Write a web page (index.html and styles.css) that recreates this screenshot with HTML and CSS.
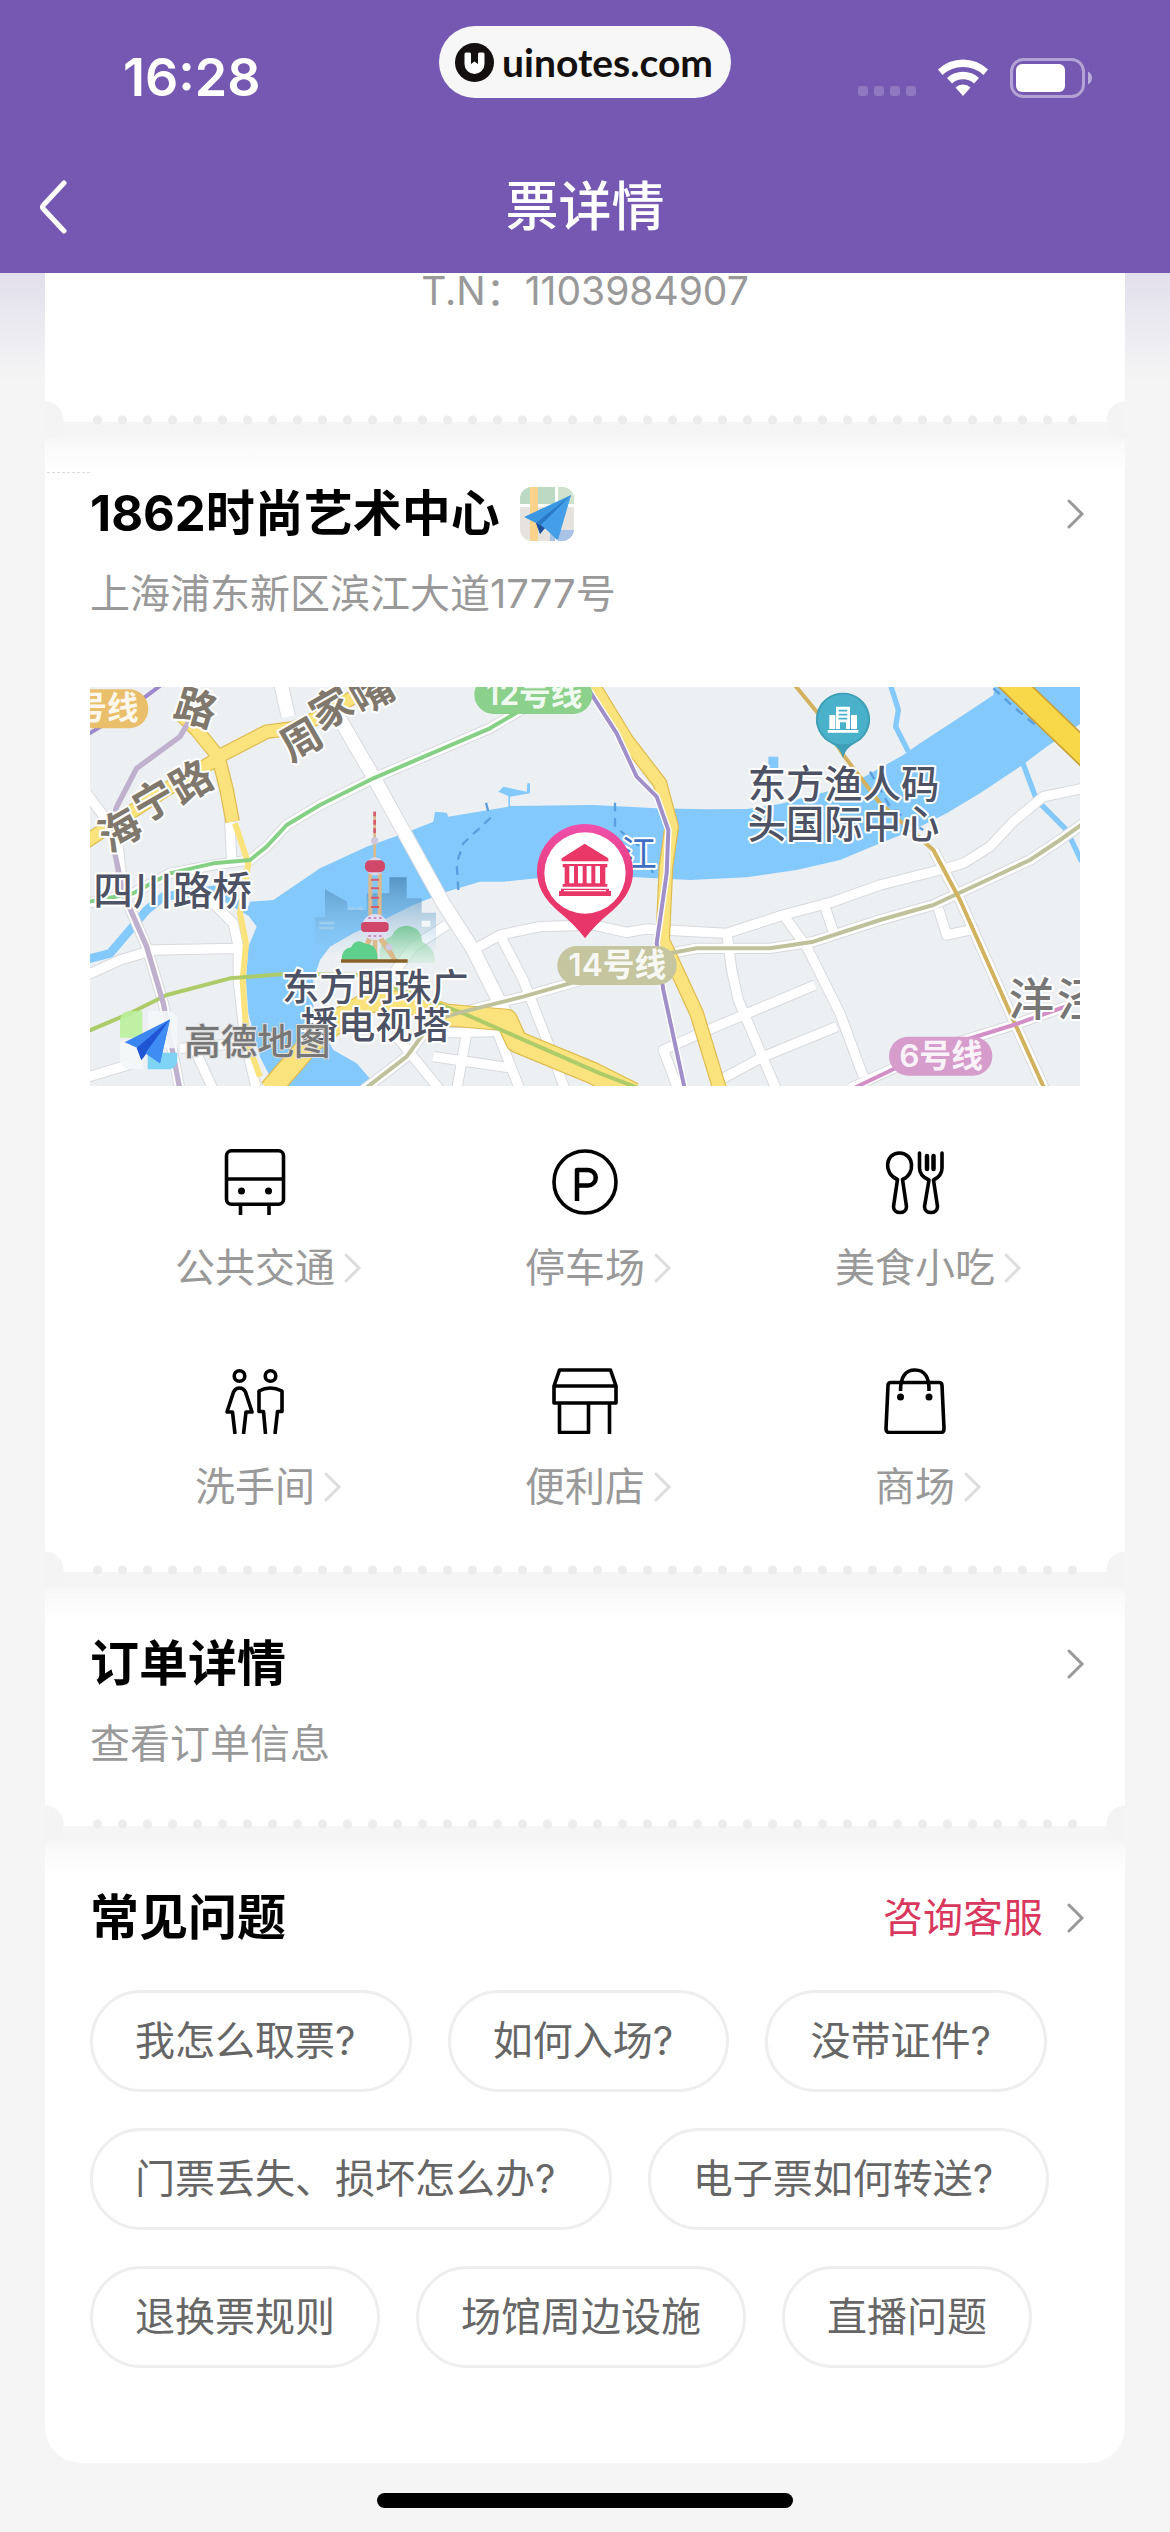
FILE: index.html
```html
<!DOCTYPE html>
<html lang="zh-CN">
<head>
    <meta charset="UTF-8">
    <meta name="viewport" content="width=device-width, initial-scale=1.0">
    <title>票详情</title>
    <link rel="stylesheet" href="styles.css">
</head>
<body>
    <header class="header">
        <div class="status">
            <span class="time">16:28</span>
            <div class="pill">
                <svg width="39" height="39" viewBox="0 0 39 39">
                    <circle cx="19.500" cy="19.500" r="19.500" fill="#14100f"/>
                    <path d="M9.500 11q0-1.500 1.500-1.500h3.500q1.500 0 1.500 1.500v10l3.500-2.500L23 21V11q0-1.500 1.500-1.500H28q1.500 0 1.500 1.500v10a10 10 0 0 1-20 0z" fill="#fff"/>
                </svg>
                <span>uinotes.com</span>
            </div>
            <div class="signals">
                <span class="cell"><i></i><i></i><i></i><i></i></span>
                <svg width="50" height="38" viewBox="0 0 50 38" fill="#fff">
                    <path d="M0 10.500a36 36 0 0 1 50 0l-4.500 5.500a30 30 0 0 0-41 0z"/>
                    <path d="M9 19a23.500 23.500 0 0 1 32 0l-5 5.500a16.500 16.500 0 0 0-22 0z"/>
                    <path d="M17.500 28.500a11 11 0 0 1 15 0L25 37z"/>
                </svg>
                <svg width="83" height="40" viewBox="0 0 83 40">
                    <rect x="1.500" y="1.500" width="72" height="37" rx="12" fill="none" stroke="#fff" stroke-opacity=".45" stroke-width="3"/>
                    <rect x="6" y="6" width="49" height="28" rx="6" fill="#fff"/>
                    <path d="M78 13.500q4 2 4 6.500t-4 6.500z" fill="#fff" fill-opacity=".5"/>
                </svg>
            </div>
        </div>
        <div class="nav">
            <button class="back" aria-label="返回">
                <svg width="28" height="54" viewBox="0 0 28 54"><path d="M25 3 4.500 25q-2 2 0 4L25 51" fill="none" stroke="#fff" stroke-width="5" stroke-linecap="round" stroke-linejoin="round"/></svg>
            </button>
            <h1>票详情</h1>
        </div>
    </header>

    <main class="ticket">
        <section class="part number">
            <p>T.N：1103984907</p>
        </section>

        <section class="part venue">
            <a class="row" href="#">
                <h2>1862时尚艺术中心</h2>
                <svg class="map-icon" width="54" height="54" viewBox="0 0 54 54">
                    <clipPath id="tile"><rect width="54" height="54" rx="12"/></clipPath>
                    <g clip-path="url(#tile)">
                        <path fill="#e6e3df" d="M0 0h54v54H0z"/>
                        <path fill="#bcd9c4" d="M0 0h36v17H0z"/>
                        <path fill="#cfe3cc" d="M38 0h16v20H38z"/>
                        <path fill="#a9c3e6" d="M30 43h24v11H30z"/>
                        <path fill="#fff" d="M0 17h54v3H0zM35 0h3v54h-3z"/>
                        <path fill="#f9d38c" d="M10 0h8v54h-8z"/>
                    </g>
                    <path fill="#3b98e0" d="M51 8 4 30l12 6 4-1 17 18z"/>
                    <path fill="#2a78c4" d="M51 8 16 36l4 11z"/>
                    <path fill="#1f4f9c" d="M16 36l4 11 5-6z"/>
                    <path fill="#459fe8" d="M51 8 21 38l17 15z"/>
                </svg>
                <svg class="arrow" width="18" height="30" viewBox="0 0 18 30"><path d="M2 2 15 15 2 28"/></svg>
            </a>
            <p class="sub">上海浦东新区滨江大道1777号</p>

            <!-- street map around the venue -->
            <svg class="map" viewBox="30 21 2970 1197" preserveAspectRatio="xMidYMid slice" role="img">
                <defs>
                    <g id="streets">
                        <path d="M1260 765 1330 900 1420 1130 1455 1230M1100 735 1000 800 940 880M950 1070 1080 1230M1020 1060 1240 1055M1060 1130 1300 1165M1160 1060 1130 1230M1250 1050 1320 1230"/>
                        <path d="M1180 810 1260 765 1380 740 1540 735 1640 757 1700 747 1940 760 2110 705 2260 665 2400 615 2600 565 2650 550 2730 500 2800 425 2890 350 3010 325"/>
                        <path d="M0 675 160 640 270 580 400 555 510 540 560 500 620 435 720 375 880 295 1230 145 1340 80"/>
                        <path d="M850 1230 980 1130 1060 1020 1150 995 1330 950 1540 890 1770 820 1850 805 2070 805 2200 785 2400 720 2560 675 2850 540 2940 480 3010 430"/>
                        <path d="M2560 510 2640 660 2800 1020 2895 1230M2110 705 2180 800 2280 1000 2350 1190M2235 680 2260 755M1942 770 1955 870 1975 960 2060 1160 2090 1230M1795 1230 1750 1110 1860 1060 2205 915M1920 1200 2050 1130 2270 1040M2575 685 2600 765 2670 750M2310 1225 2560 1110 2800 1035 2970 975"/>
                        <path d="M10 890 120 840 220 810 470 805M20 340 110 460 130 640 200 800 250 970 300 1230M10 1195 160 1150M300 1105 480 1090M340 1100 400 1230M448 390 455 540M390 660 460 730 475 800 475 900 495 1080 530 1230"/>
                    </g>
                    <g id="main-streets">
                        <path d="M600 0 625 110M740 50 880 290 1090 670 1180 810 1280 1010"/>
                    </g>
                    <g id="avenues">
                        <path d="M300 100 350 150 415 230 440 330 458 425M415 230 560 155 640 145 720 110 840 40M415 235 240 340 10 490"/>
                        <path d="M1530 0 1640 180 1740 310 1775 440 1758 560 1748 780 1850 1000 1920 1230"/>
                    </g>
                    <g id="tunnel">
                        <path d="M570 1230 690 1090 790 1010 870 965 980 965 1100 1005 1280 1020 1310 1085 1540 1180 1660 1240"/>
                    </g>
                    <linearGradient id="pink" x1="0" y1="0" x2="0" y2="1"><stop offset="0" stop-color="#ee50ac"/><stop offset=".6" stop-color="#e9366a"/></linearGradient>
                    <linearGradient id="city" x1="0" y1="0" x2="0" y2="1"><stop offset="0" stop-color="#4a88b8"/><stop offset="1" stop-color="#8fc4e6" stop-opacity="0"/></linearGradient>
                    <linearGradient id="tree" x1="0" y1="0" x2="0" y2="1"><stop offset="0" stop-color="#7bc79a"/><stop offset="1" stop-color="#c4ead2" stop-opacity=".5"/></linearGradient>
                </defs>
                <path class="land" d="M0 0h3030v1240H0z"/>
                <path class="water" d="M510 665 580 660 720 565 860 500 985 455 1060 425 1065 395 1100 398 1105 410 1285 380V348L1255 335 1270 320 1340 335 1342 310H1350V340L1290 350V378L1540 375 1730 385 1880 388 2000 387 2100 372 2200 345 2300 320 2380 275 2470 225 2520 190 2650 105 2740 45 2745 10H3010V125L2900 200 2820 260 2700 340 2600 400 2500 450 2400 490 2280 540 2150 570 2000 592 1830 600 1540 585 1400 592 1270 605 1200 605 1100 635 1000 675 920 715 820 760 750 800 720 840 700 900 695 960 720 1040 760 1110 830 1150 900 1230H590L540 1130 505 1000 498 900 505 800 530 740 500 700z"/>
                <path class="water" d="M2065 230h30v35h-30z"/>
                <path class="creek" d="M20 838 90 820 150 750 200 690 250 650 400 630 510 695"/>
                <path class="creek thin" d="M2430 10 2455 90 2447 140 2485 215M2825 240 2870 360 2960 450 3005 545"/>
                <path class="ferry" d="M1218 368 1230 415 1150 490 1130 550 1135 630M1605 368 1605 440 1680 500 1720 580M2740 25 2800 80 2860 130 2925 160M2370 275 2430 380 2480 420 2530 450"/>
                <use href="#streets" class="street-edge"/>
                <use href="#main-streets" class="street-edge wide"/>
                <use href="#streets" class="street"/>
                <use href="#main-streets" class="street wide"/>
                <use href="#avenues" class="avenue-edge"/>
                <use href="#tunnel" class="avenue-edge wide"/>
                <use href="#avenues" class="avenue"/>
                <use href="#tunnel" class="avenue wide"/>
                <path class="avenue side" d="M465 430 505 550 480 700 498 790 488 900 500 1080 540 1190"/>
                <path class="bridge-edge" d="M2760-25 3040 245"/>
                <path class="bridge" d="M2760-25 3040 245"/>

                <path class="line" stroke="#86d086" d="M0 670 160 640 270 580 400 550 510 540 560 500 620 435 720 375 880 295 1230 145 1340 80"/>
                <path class="line" stroke="#aecb69" d="M20 1055 150 1000 260 945 450 895 610 882 860 885 960 930 1150 1000 1560 1180 1690 1230"/>
                <path class="line" stroke="#bfc19b" d="M850 1230 980 1130 1060 1020 1150 995 1330 950 1540 890 1770 820 1850 805 2070 805 2200 785 2400 720 2560 675 2850 540 2940 480 3010 430"/>
                <path class="line" stroke="#d2b25f" d="M2140 10 2210 95 2290 225 2400 370 2560 510 2640 660 2800 1020 2895 1230"/>
                <path class="line" stroke="#d28fc6" d="M2310 1230 2560 1110 2800 1035 2970 975"/>
                <path class="line" stroke="#9c88cc" d="M20 165 130 100 250 10"/>
                <path class="line mauve" stroke="#bfb0ce" d="M335 110 300 170 170 265 110 380 90 450 130 640 200 800 250 970 300 1230"/>
                <path class="line casing" stroke="#fff" d="M1520 20 1610 160 1670 290 1730 350 1765 450 1760 580 1730 790 1750 930 1815 1230"/>
                <path class="line" stroke="#a18fc9" d="M1520 20 1610 160 1670 290 1730 350 1765 450 1760 580 1730 790 1750 930 1815 1230"/>

                <g class="tags">
                    <rect x="-100" y="28" width="305" height="117" rx="58" fill="#e9bf6b"/><text x="-14" y="118">号线</text>
                    <rect x="1183" y="-15" width="354" height="117" rx="58" fill="#8bd08b"/><text x="1218" y="76">12号线</text>
                    <rect x="1432" y="798" width="358" height="117" rx="58" fill="#c5c69f"/><text x="1465" y="889">14号线</text>
                    <rect x="2427" y="1070" width="310" height="117" rx="58" fill="#d69dcc"/><text x="2458" y="1160">6号线</text>
                </g>

                <g class="road-names">
                    <text transform="translate(275 108) rotate(17)">路</text>
                    <text transform="translate(88 520) rotate(-30)">海</text>
                    <text transform="translate(190 432) rotate(-30)">宁</text>
                    <text transform="translate(302 375) rotate(-30)">路</text>
                    <text transform="translate(632 248) rotate(-30)">周</text>
                    <text transform="translate(722 155) rotate(-30)">家</text>
                    <text transform="translate(845 108) rotate(-30)">嘴</text>
                </g>

                <!-- Oriental Pearl tower -->
                <g>
                    <path fill="url(#city)" d="M735 628 802 665V690H860V640H928V592H980V655H1025V698H1068V830H705V712H735z" opacity=".8"/>
                    <path fill="#9fcdf0" d="M718 725h45v8h-45zM718 740h45v8h-45zM805 682h20v8h-20zM830 682h20v8h-20z"/>
                    <path fill="#f4f8fb" d="M1025 722h26v18h-26z"/>
                    <path fill="url(#tree)" d="M900 848q-10-60 35-80 20-40 60-28 30 8 32 46 40 20 38 62z"/>
                    <path fill="#dcb98a" d="M880 395h8v140h-8zM865 580h12v130h-12zM893 580h12v130h-12zM878 775h14v70h-14zM862 770 840 830 852 834 876 780zM908 770 930 800 955 845 940 845 895 780z"/>
                    <path fill="#d65a70" d="M880 395h8v14h-8zM880 420h8v14h-8zM880 445h8v14h-8zM873 596h24v6h-24zM873 622h24v6h-24zM873 650h24v6h-24zM873 678h24v6h-24z"/>
                    <circle cx="884" cy="482" r="11" fill="#cfc9de"/>
                    <circle cx="885" cy="559" r="27" fill="#d9d5ea"/>
                    <rect x="855" y="541" width="60" height="36" rx="15" fill="#d0476a"/>
                    <circle cx="885" cy="741" r="39" fill="#e2def2"/>
                    <rect x="843" y="726" width="83" height="30" rx="11" fill="#d0476a"/>
                    <path stroke="#c98fc0" stroke-width="6" stroke-dasharray="8 8" d="M865 714h42M865 768h42"/>
                    <circle cx="927" cy="802" r="10" fill="#cfc9de"/>
                    <path fill="#5ed08c" d="M785 840q0-35 28-38 15-30 45-10 35 0 35 48z"/>
                    <path fill="#8a6128" d="M783 838h200v10H783z"/>
                </g>

                <g class="poi">
                    <text x="40" y="675" font-size="119">四川路桥</text>
                    <text x="606" y="962" font-size="112">东方明珠广</text>
                    <text x="662" y="1076" font-size="112">播电视塔</text>
                    <text x="2003" y="354" font-size="115">东方渔人码</text>
                    <text x="2003" y="475" font-size="115">头国际中心</text>
                </g>
                <text class="town" x="2786" y="1008">洋</text>
                <text class="town" x="2930" y="1008">泾</text>
                <text class="river-name" x="1622" y="560">江</text>

                <g>
                    <path fill="#3f9fb6" d="M2289 38a80 80 0 0 1 34 153q-27 13-34 44-7-31-34-44a80 80 0 0 1 34-153z"/>
                    <circle cx="2289" cy="118" r="75" fill="#49b2ca"/>
                    <path fill="#fff" d="M2243 150h92v8h-92zM2248 105h18v42h-18zM2313 105h18v42h-18zM2268 80h42v67h-12v-20h-18v20h-12z"/>
                    <path stroke="#49b2ca" stroke-width="5" d="M2276 92h26M2276 104h26M2276 116h26"/>
                </g>

                <g>
                    <path fill="url(#pink)" d="M1515 432a144 144 0 0 1 144 145q0 62-62 115-54 44-82 83-28-39-82-83-62-53-62-115a144 144 0 0 1 144-145z"/>
                    <circle cx="1515" cy="579" r="122" fill="#fff"/>
                    <path fill="#e93767" d="M1514 491 1585 535V544H1445V535zM1448 552H1582V562H1576V612H1582V620H1448V612H1454V562H1448zM1443 626H1587V633H1593V648H1437V633H1443z"/>
                    <path fill="#fff" d="M1468 558h14v52h-14zM1494 558h14v52h-14zM1520 558h14v52h-14zM1546 558h14v52h-14zM1452 630h126v4h-126z"/>
                </g>

                <g>
                    <path fill="#b9f09a" d="M120 1025q0-32 32-32h35v80h-67z" opacity=".9"/>
                    <path fill="#f4f7f8" d="M203 993h57q32 0 32 32v80h-89zM120 1085h70v83h-38q-32 0-32-32z" opacity=".9"/>
                    <path fill="#7fd3f5" d="M203 1118h89v18q0 32-32 32h-57z"/>
                    <path fill="#3b86f0" d="M270 1018 134 1087 178 1106 240 1150z"/>
                    <path fill="#1f55d2" d="M270 1018 170 1104 184 1141 200 1120z"/>
                    <path fill="#3f8cf5" d="M270 1018 196 1120 240 1150z"/>
                    <text class="brand" x="312" y="1126">高德地图</text>
                </g>
            </svg>

            <nav class="facilities">
                <a href="#">
                    <svg class="icon" viewBox="0 0 66 66"><rect x="4.500" y="1.800" width="57" height="53.500" rx="5"/><path d="M4.500 30h57M18.500 55v11M47 55v11"/><circle class="dot" cx="19.500" cy="42" r="3.500"/><circle class="dot" cx="46.500" cy="42" r="3.500"/></svg>
                    <span>公共交通<svg class="arrow light" width="18" height="30" viewBox="0 0 18 30"><path d="M2 2 15 15 2 28"/></svg></span>
                </a>
                <a href="#">
                    <svg class="icon" viewBox="0 0 66 66"><circle cx="33" cy="33" r="31"/><path d="M25 52V21h11a7.500 7.500 0 0 1 0 15.500H25" stroke-width="4.500"/></svg>
                    <span>停车场<svg class="arrow light" width="18" height="30" viewBox="0 0 18 30"><path d="M2 2 15 15 2 28"/></svg></span>
                </a>
                <a href="#">
                    <svg class="icon" viewBox="0 0 66 66"><path d="M15.500 30.500C1 25 3 4 17.500 4S34 25 20.500 30.500l4 27c0 8-13 8-13 0zM37.500 4v15q0 8 9.500 12l-4.500 26.500c0 8 13 8 13 0L51.500 31Q60 27 60 19V4" stroke-linecap="round"/><path d="M45 7v13M51.500 7v13" stroke-width="4.500" stroke-linecap="round"/></svg>
                    <span>美食小吃<svg class="arrow light" width="18" height="30" viewBox="0 0 18 30"><path d="M2 2 15 15 2 28"/></svg></span>
                </a>
                <a href="#">
                    <svg class="icon" viewBox="0 0 66 66"><circle cx="17.500" cy="8" r="5.300"/><circle cx="48.500" cy="8" r="5.300"/><path d="M13 66 10.500 44H5l6.500-20q2-4 6-4t6 4L30 44h-6L21.500 66M43.500 66 41.500 43.500H37V23q11-6 23 0v20.500h-4.500L53 66"/></svg>
                    <span>洗手间<svg class="arrow light" width="18" height="30" viewBox="0 0 18 30"><path d="M2 2 15 15 2 28"/></svg></span>
                </a>
                <a href="#">
                    <svg class="icon" viewBox="0 0 66 66"><path d="M7.500 2h51l5.500 16v17H2V18zM2 18h62M7.500 35v29.500h29V35M57.500 35v31"/></svg>
                    <span>便利店<svg class="arrow light" width="18" height="30" viewBox="0 0 18 30"><path d="M2 2 15 15 2 28"/></svg></span>
                </a>
                <a href="#">
                    <svg class="icon" viewBox="0 0 66 66"><path d="M9 14.500h48q3 0 3 3l2 43q0 4-3 4H7q-3 0-3-4l2-43q0-3 3-3zM18.500 23q0-21 14.500-21t14 21"/><circle class="dot" cx="18.500" cy="29" r="3.500"/><circle class="dot" cx="47" cy="29" r="3.500"/></svg>
                    <span>商场<svg class="arrow light" width="18" height="30" viewBox="0 0 18 30"><path d="M2 2 15 15 2 28"/></svg></span>
                </a>
            </nav>
        </section>

        <section class="part order">
            <a class="row" href="#">
                <h2>订单详情</h2>
                <svg class="arrow" width="18" height="30" viewBox="0 0 18 30"><path d="M2 2 15 15 2 28"/></svg>
            </a>
            <p class="sub">查看订单信息</p>
        </section>

        <section class="part faq">
            <div class="row">
                <h2>常见问题</h2>
                <a class="service" href="#">咨询客服
                    <svg class="arrow" width="18" height="30" viewBox="0 0 18 30"><path d="M2 2 15 15 2 28"/></svg>
                </a>
            </div>
            <div class="chips">
                <button>我怎么取票?&nbsp;</button>
                <button>如何入场?&nbsp;</button>
                <button>没带证件?&nbsp;</button>
                <button>门票丢失、损坏怎么办?&nbsp;</button>
                <button>电子票如何转送?&nbsp;</button>
                <button>退换票规则</button>
                <button>场馆周边设施</button>
                <button>直播问题</button>
            </div>
        </section>
    </main>

    <div class="home-bar"></div>
</body>
</html>
```

FILE: styles.css
```css
* {
    box-sizing: border-box;
}

body {
    margin: 0;
    background: #f5f5f5;
    color: #000;
    font-family: Inter, "Noto Sans CJK SC", sans-serif;
    font-size: 40px;
    line-height: 56px;
}

h1, h2, p {
    margin: 0;
}

a {
    color: inherit;
    text-decoration: none;
}

button {
    font: inherit;
    cursor: pointer;
}

svg {
    display: block;
    flex: none;
}

/* header */
.header {
    background: #7558b2;
    color: #fff;
    padding-bottom: 15px;
}

.status {
    position: relative;
    display: flex;
    justify-content: space-between;
    align-items: center;
    height: 156px;
    padding: 0 77px 0 123px;
}

.time {
    font-size: 52px;
    font-weight: 600;
}

.pill {
    position: absolute;
    top: 26px;
    left: 50%;
    transform: translateX(-50%);
    display: flex;
    align-items: center;
    gap: 8px;
    height: 72px;
    padding: 0 18px 0 16px;
    border-radius: 36px;
    background: #f7f7f7;
    color: #14100f;
    font-family: Lato, sans-serif;
    font-size: 39px;
    font-weight: 700;
}

.signals {
    display: flex;
    align-items: center;
    gap: 22px;
}

.cell {
    display: flex;
    align-self: flex-end;
    gap: 6px;
    padding-bottom: 2px;
}

.cell i {
    width: 10px;
    height: 10px;
    border-radius: 3px;
    background: rgba(255, 255, 255, 0.2);
}

.nav {
    display: grid;
    grid-template-columns: 1fr auto 1fr;
    align-items: center;
    height: 102px;
    padding: 0 39px;
}

.nav h1 {
    font-size: 53px;
    font-weight: 500;
}

.back {
    justify-self: start;
    padding: 0;
    border: none;
    background: none;
}

/* ticket */
.ticket {
    padding: 0 45px;
    background: linear-gradient(#e2dfec, #f5f5f5 110px);
}

.part {
    position: relative;
    padding: 62px 45px 54px;
    background: linear-gradient(#f5f5f5 14px, #fafafa 24px, #fff 52px);
}

/* perforated edge: a notch on each side, dots between */
.part:not(:last-child)::after {
    content: "";
    position: absolute;
    z-index: 1;
    left: 0;
    right: 0;
    bottom: -17px;
    height: 38px;
    padding: 0 40px;
    background:
        radial-gradient(circle at 0 50%, #f4f4f4 18px, transparent 19px) no-repeat,
        radial-gradient(circle at 100% 50%, #f4f4f4 18px, transparent 19px) no-repeat,
        radial-gradient(circle, #ececec 4px, transparent 5px) space center / 25px 38px content-box;
}

.number {
    padding: 0 45px 113px;
    background: #fff;
    color: #999;
    font-size: 39px;
    line-height: 36px;
    text-align: center;
}

.venue {
    padding-bottom: 57px;
}

.venue::before {
    content: "";
    position: absolute;
    top: 50px;
    left: 2px;
    width: 43px;
    border-top: 1px dashed #ddd;
}

.row {
    display: flex;
    align-items: center;
    height: 60px;
    margin-right: -5px;
}

.row h2 {
    font-size: 49px;
    font-weight: 700;
    line-height: 60px;
}

.map-icon {
    margin-left: 20px;
}

.arrow {
    fill: none;
    stroke: #999;
    stroke-width: 3;
    stroke-linecap: round;
}

.row > .arrow {
    margin-left: auto;
}

.sub {
    margin-top: 22px;
    color: #999;
}

/* map */
.map {
    width: 100%;
    margin-top: 65px;
}

.land {
    fill: #edf0f3;
}

.water {
    fill: #84c9fb;
}

.creek {
    fill: none;
    stroke: #84c9fb;
    stroke-width: 26;
}

.thin {
    stroke-width: 16;
}

.ferry {
    fill: none;
    stroke: #5a9fdd;
    stroke-width: 7;
    stroke-dasharray: 26 20;
}

.street-edge, .street, .avenue-edge, .avenue, .bridge-edge, .bridge, .line {
    fill: none;
    stroke-linejoin: round;
}

.street-edge {
    stroke: #d8d9dd;
    stroke-width: 34;
}

.street-edge.wide {
    stroke-width: 46;
}

.street {
    stroke: #fff;
    stroke-width: 28;
}

.street.wide {
    stroke-width: 40;
}

.avenue-edge {
    stroke: #deb94e;
    stroke-width: 44;
}

.avenue-edge.wide {
    stroke-width: 68;
}

.avenue {
    stroke: #fae37c;
    stroke-width: 37;
}

.avenue.wide {
    stroke-width: 61;
}

.avenue.side {
    stroke-width: 18;
}

.bridge-edge {
    stroke: #c9a03a;
    stroke-width: 76;
}

.bridge {
    stroke: #f8d848;
    stroke-width: 66;
}

.line {
    stroke-width: 12;
}

.mauve {
    stroke-width: 16;
}

.casing {
    stroke-width: 20;
}

.tags text {
    fill: #fff;
    fill-opacity: 0.9;
    font-size: 95px;
    font-weight: 600;
}

.road-names text {
    fill: #80786c;
    font-size: 124px;
    font-weight: 700;
}

.poi text {
    fill: #4d5365;
    font-weight: 500;
}

.road-names text, .poi text, .town, .river-name {
    stroke: #fff;
    stroke-width: 12;
    stroke-linejoin: round;
    paint-order: stroke;
}

.town {
    fill: #777;
    font-size: 136px;
    font-weight: 500;
}

.river-name {
    fill: #3d6cc0;
    font-size: 108px;
}

.brand {
    fill: #777;
    font-size: 110px;
    font-weight: 500;
    stroke: #ddd;
    stroke-width: 6;
    paint-order: stroke;
}

/* facilities */
.facilities {
    display: grid;
    grid-template-columns: repeat(3, 1fr);
    row-gap: 72px;
    margin-top: 63px;
    color: #999;
}

.facilities a {
    display: flex;
    flex-direction: column;
    align-items: center;
    gap: 25px;
}

.facilities span {
    position: relative;
}

.icon {
    width: 66px;
    height: 66px;
    fill: none;
    stroke: #000;
    stroke-width: 3.6;
    stroke-linejoin: round;
}

.icon .dot {
    fill: #000;
    stroke: none;
}

.light {
    position: absolute;
    top: 13px;
    left: 100%;
    margin-left: 9px;
    stroke: #ddd;
}

/* faq */
.faq {
    padding-bottom: 95px;
    border-radius: 0 0 36px 36px;
}

.service {
    display: flex;
    align-items: center;
    gap: 24px;
    margin-left: auto;
    color: #d9385e;
}

.chips {
    display: flex;
    flex-wrap: wrap;
    gap: 36px;
    margin-top: 42px;
}

.chips button {
    height: 102px;
    padding: 0 42px;
    border: 3px solid #eee;
    border-radius: 51px;
    background: #fff;
    color: #666;
}

.home-bar {
    width: 416px;
    height: 15px;
    margin: 30px auto 24px;
    border-radius: 8px;
    background: #000;
}
```
